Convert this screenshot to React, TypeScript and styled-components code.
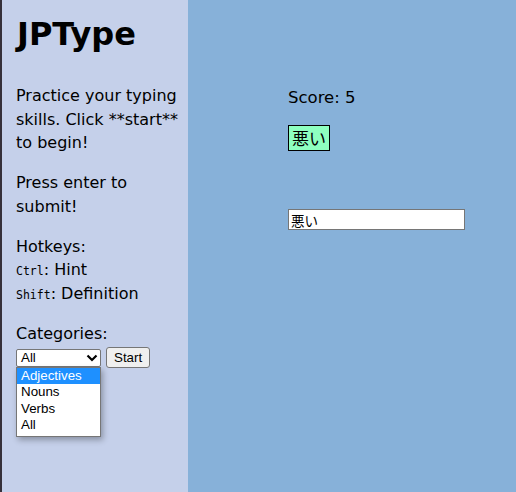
import React from "react";
import styled, { createGlobalStyle } from "styled-components";

const Global = createGlobalStyle`
  html, body { margin: 0; padding: 0; }
  body { font-family: "DejaVu Sans", "Noto Sans CJK JP", sans-serif; color: #000; }
`;

const Page = styled.div`
  display: flex;
  min-height: 492px;
  border-left: 2px solid #36303a;
  box-sizing: border-box;
`;

const Sidebar = styled.aside`
  width: 186px;
  flex-shrink: 0;
  background: #c5d0ea;
  padding: 0 0 0 14px;
  box-sizing: border-box;
`;

const Title = styled.h1`
  margin: 15px 0 0 1px;
  font-size: 32px;
  line-height: 38px;
  font-weight: bold;
`;

const Para = styled.p<{ $top?: number }>`
  margin: ${(p) => p.$top ?? 16.5}px 0 0;
  font-size: 16px;
  line-height: 23.5px;
`;

const Code = styled.code`
  font-family: "DejaVu Sans Mono", monospace;
  font-size: 11.5px;
  line-height: 1;
`;

const Controls = styled.div`
  display: flex;
  align-items: center;
  gap: 5px;
  margin-top: 2px;
`;

const SelectWrap = styled.div`
  position: relative;
`;

const SelectBox = styled.div`
  width: 85px;
  height: 18px;
  box-sizing: border-box;
  border: 1px solid #767676;
  border-radius: 2px;
  background: #fff;
  display: flex;
  align-items: center;
  justify-content: space-between;
  padding: 0 2px 0 4px;
  font-family: "Liberation Sans", Arial, sans-serif;
  font-size: 13.33px;
`;

const List = styled.ul`
  position: absolute;
  top: 18px;
  left: 0;
  width: 85px;
  margin: 0;
  padding: 0 0 2px;
  list-style: none;
  box-sizing: border-box;
  border: 1px solid #767676;
  background: #fff;
  box-shadow: 2px 3px 6px rgba(0, 0, 0, 0.3);
  font-family: "Liberation Sans", Arial, sans-serif;
  font-size: 13.33px;
`;

const Item = styled.li<{ $active?: boolean }>`
  height: 16.5px;
  line-height: 16.5px;
  padding: 0 4px;
  background: ${(p) => (p.$active ? "#1e90ff" : "transparent")};
  color: ${(p) => (p.$active ? "#fff" : "#000")};
`;

const Button = styled.button`
  height: 21px;
  padding: 0 7px;
  font-family: "Liberation Sans", Arial, sans-serif;
  font-size: 13.33px;
  background: #efefef;
  border: 1px solid #767676;
  border-radius: 3px;
  color: #000;
`;

const Main = styled.main`
  flex: 1;
  background: #87b1d9;
  padding: 86px 0 0 100px;
`;

const Score = styled.div`
  font-size: 16.5px;
  line-height: 23px;
`;

const Word = styled.div`
  display: inline-block;
  margin-top: 16px;
  border: 1px solid #000;
  background: #8effc0;
  padding: 1px 3px;
  font-family: "Noto Sans CJK JP", sans-serif;
  font-size: 17px;
  line-height: 22px;
`;

const Answer = styled.input`
  display: block;
  margin-top: 58px;
  width: 177px;
  height: 21px;
  box-sizing: border-box;
  border: 1px solid #767676;
  padding: 0 2px;
  font-family: "Noto Sans CJK JP", sans-serif;
  font-size: 13.5px;
  color: #000;
  background: #fff;
  outline: none;
`;

const Chevron = () => (
  <svg width="12" height="8" viewBox="0 0 12 8">
    <path d="M1.5 1.5 L6 6 L10.5 1.5" fill="none" stroke="#000" strokeWidth="2.2" />
  </svg>
);

export default function App() {
  return (
    <>
      <Global />
      <Page>
        <Sidebar>
          <Title>JPType</Title>
          <Para $top={31}>Practice your typing skills. Click **start** to begin!</Para>
          <Para>Press enter to submit!</Para>
          <Para>
            Hotkeys:
            <br />
            <Code>Ctrl</Code>: Hint
            <br />
            <Code>Shift</Code>: Definition
          </Para>
          <Para>Categories:</Para>
          <Controls>
            <SelectWrap>
              <SelectBox>
                <span>All</span>
                <Chevron />
              </SelectBox>
              <List>
                <Item $active>Adjectives</Item>
                <Item>Nouns</Item>
                <Item>Verbs</Item>
                <Item>All</Item>
              </List>
            </SelectWrap>
            <Button>Start</Button>
          </Controls>
        </Sidebar>
        <Main>
          <Score>Score: 5</Score>
          <Word>悪い</Word>
          <Answer defaultValue="悪い" />
        </Main>
      </Page>
    </>
  );
}
